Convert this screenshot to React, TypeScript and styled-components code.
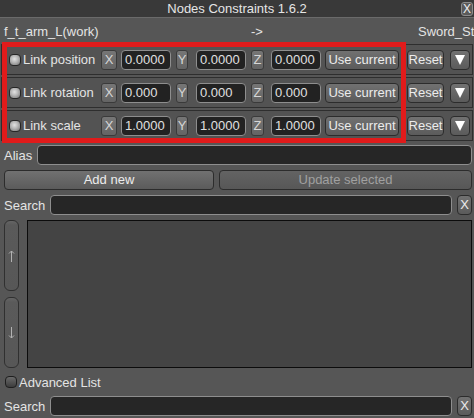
import React from "react";
import styled, { createGlobalStyle } from "styled-components";

const GlobalStyle = createGlobalStyle`
  html, body {
    margin: 0;
    padding: 0;
    background: #565656;
  }
  body {
    font-family: "Liberation Sans", Arial, sans-serif;
    font-size: 13px;
    color: #e4e4e4;
  }
`;

const Window = styled.div`
  position: relative;
  width: 474px;
  height: 418px;
  overflow: hidden;
  background: #565656;
  display: flex;
  flex-direction: column;
`;

const TitleBar = styled.div`
  height: 17px;
  display: grid;
  grid-template-columns: 1fr auto 1fr;
  align-items: center;
  background: #393939;
  border-bottom: 1px solid #6a6a6a;
`;

const Title = styled.div`
  grid-column: 2;
  color: #e6e6e6;
  line-height: 17px;
`;

const CloseButton = styled.div`
  grid-column: 3;
  justify-self: end;
  width: 12px;
  height: 14px;
  margin-right: 1px;
  box-sizing: border-box;
  border: 1px solid #8c8c8c;
  border-radius: 3px;
  background: #5a5a5a;
  font-size: 12px;
  line-height: 12px;
  text-align: center;
  color: #eee;
`;

const HeaderRow = styled.div`
  height: 26px;
  display: grid;
  grid-template-columns: 247px 167px 56px;
  align-items: center;
  white-space: nowrap;
  padding-left: 4px;
`;

const ConstraintList = styled.div`
  display: flex;
  flex-direction: column;
  gap: 2px;
  margin: 0 1px;
`;

const ConstraintRow = styled.div`
  height: 31px;
  box-sizing: border-box;
  border: 1px solid #2e2e2e;
  background: #535353;
  display: flex;
  align-items: center;
  padding-left: 7px;
`;

const Toggle = styled.div`
  width: 12px;
  height: 12px;
  box-sizing: border-box;
  border: 1px solid #262626;
  border-radius: 4px;
  background: radial-gradient(circle at 45% 40%, #e2e2e2 0, #b4b4b4 45%, #707070 100%);
`;

const RowLabel = styled.div`
  width: 80px;
  padding-left: 2px;
  box-sizing: border-box;
  white-space: nowrap;
`;

const AxisSlot = styled.div`
  width: 20px;
  display: flex;
`;

const AxisTag = styled.div<{ $w: number }>`
  width: ${(p) => p.$w}px;
  height: 20px;
  box-sizing: border-box;
  border: 1px solid #3a3a3a;
  border-radius: 3px;
  background: linear-gradient(#767676, #646464);
  color: #d6d6d6;
  font-size: 13px;
  line-height: 18px;
  text-align: center;
`;

const NumField = styled.input`
  width: 50px;
  height: 20px;
  margin-right: 5px;
  box-sizing: border-box;
  border: 1px solid #8e8e8e;
  border-radius: 4px;
  background: #222222;
  color: #e0e0e0;
  font: inherit;
  padding: 0 0 0 3px;
  outline: none;
`;

const Button = styled.div<{ $w?: number; $gap?: number; $dim?: boolean }>`
  ${(p) => (p.$w ? `width: ${p.$w}px;` : "")}
  margin-left: ${(p) => p.$gap ?? 0}px;
  height: 20px;
  box-sizing: border-box;
  border: 1px solid #2c2c2c;
  border-radius: 4px;
  background: ${(p) =>
    p.$dim
      ? "linear-gradient(#636363, #575757)"
      : "linear-gradient(#717171, #5b5b5b)"};
  color: ${(p) => (p.$dim ? "#a0a0a0" : "#ececec")};
  line-height: 18px;
  text-align: center;
  white-space: nowrap;
  display: flex;
  align-items: center;
  justify-content: center;
`;

/* solid white down triangle of the dropdown button */
const DownTriangle = styled.span`
  width: 0;
  height: 0;
  border-left: 5px solid transparent;
  border-right: 5px solid transparent;
  border-top: 10px solid #ffffff;
`;

const Body = styled.div`
  display: flex;
  flex-direction: column;
  gap: 5px;
  margin-top: 4px;
  padding: 0 2px 0 4px;
`;

const FieldRow = styled.div`
  height: 20px;
  display: flex;
  align-items: center;
  gap: 5px;
`;

const TextField = styled.input`
  flex: 1;
  min-width: 0;
  height: 20px;
  box-sizing: border-box;
  border: 1px solid #8e8e8e;
  border-radius: 4px;
  background: #262626;
  color: #e0e0e0;
  font: inherit;
  padding: 0 0 0 3px;
  outline: none;
`;

const ButtonPair = styled.div`
  display: grid;
  grid-template-columns: 210px 1fr;
  gap: 5px;
`;

const ListArea = styled.div`
  height: 148px;
  display: flex;
  gap: 8px;
`;

const ScrollColumn = styled.div`
  width: 15px;
  display: flex;
  flex-direction: column;
  gap: 6px;
`;

const ScrollButton = styled.div`
  flex: 1;
  box-sizing: border-box;
  border: 1px solid #303030;
  border-radius: 6px;
  background: linear-gradient(#656565 0, #5a5a5a 6%, #575757 100%);
  display: flex;
  align-items: center;
  justify-content: center;
`;

const ListPanel = styled.div`
  flex: 1;
  box-sizing: border-box;
  border: 1px solid #0c0c0c;
  background: #444444;
`;

const CheckRow = styled.div`
  height: 18px;
  display: flex;
  align-items: center;
  gap: 2px;
  padding-left: 1px;
`;

const CheckBox = styled.div`
  width: 12px;
  height: 12px;
  box-sizing: border-box;
  border: 1px solid #1e1e1e;
  border-radius: 4px;
  background: linear-gradient(#6a6a6a, #3c3c3c);
`;

const ClearButton = styled(Button)`
  width: 15px;
  font-size: 13px;
`;

const RedFrame = styled.div`
  position: absolute;
  left: 2px;
  top: 42px;
  width: 404px;
  height: 101px;
  box-sizing: border-box;
  border: 5px solid #e01b1b;
  pointer-events: none;
`;

function ThinArrow({ down }: { down?: boolean }) {
  return (
    <svg width="7" height="12" viewBox="0 0 7 12">
      <g
        transform={down ? "rotate(180 3.5 6)" : undefined}
        stroke="#b2b2b2"
        strokeWidth="1"
        fill="none"
      >
        <line x1="3.5" y1="1" x2="3.5" y2="12" />
        <polyline points="1,3.5 3.5,1 6,3.5" />
      </g>
    </svg>
  );
}

type Constraint = {
  label: string;
  values: [string, string, string];
};

const constraints: Constraint[] = [
  { label: "Link position", values: ["0.0000", "0.0000", "0.0000"] },
  { label: "Link rotation", values: ["0.000", "0.000", "0.000"] },
  { label: "Link scale", values: ["1.0000", "1.0000", "1.0000"] },
];

const axes: { name: string; w: number }[] = [
  { name: "X", w: 16 },
  { name: "Y", w: 12 },
  { name: "Z", w: 13 },
];

function App() {
  return (
    <>
      <GlobalStyle />
      <Window>
        <TitleBar>
          <Title>Nodes Constraints 1.6.2</Title>
          <CloseButton>X</CloseButton>
        </TitleBar>

        <HeaderRow>
          <span>f_t_arm_L(work)</span>
          <span>-&gt;</span>
          <span>Sword_St</span>
        </HeaderRow>

        <ConstraintList>
          {constraints.map((c) => (
            <ConstraintRow key={c.label}>
              <Toggle />
              <RowLabel>{c.label}</RowLabel>
              {axes.map((a, i) => (
                <React.Fragment key={a.name}>
                  <AxisSlot>
                    <AxisTag $w={a.w}>{a.name}</AxisTag>
                  </AxisSlot>
                  <NumField readOnly value={c.values[i]} />
                </React.Fragment>
              ))}
              <Button $w={74} $gap={-1}>Use current</Button>
              <Button $w={37} $gap={8}>Reset</Button>
              <Button $w={20} $gap={6}>
                <DownTriangle />
              </Button>
            </ConstraintRow>
          ))}
        </ConstraintList>

        <Body>
          <FieldRow>
            <span>Alias</span>
            <TextField readOnly value="" />
          </FieldRow>

          <ButtonPair>
            <Button>Add new</Button>
            <Button $dim>Update selected</Button>
          </ButtonPair>

          <FieldRow>
            <span>Search</span>
            <TextField readOnly value="" />
            <ClearButton>X</ClearButton>
          </FieldRow>

          <ListArea>
            <ScrollColumn>
              <ScrollButton>
                <ThinArrow />
              </ScrollButton>
              <ScrollButton>
                <ThinArrow down />
              </ScrollButton>
            </ScrollColumn>
            <ListPanel />
          </ListArea>

          <CheckRow>
            <CheckBox />
            <span>Advanced List</span>
          </CheckRow>

          <FieldRow>
            <span>Search</span>
            <TextField readOnly value="" />
            <ClearButton>X</ClearButton>
          </FieldRow>
        </Body>
        <RedFrame />
      </Window>
    </>
  );
}

export default App;
